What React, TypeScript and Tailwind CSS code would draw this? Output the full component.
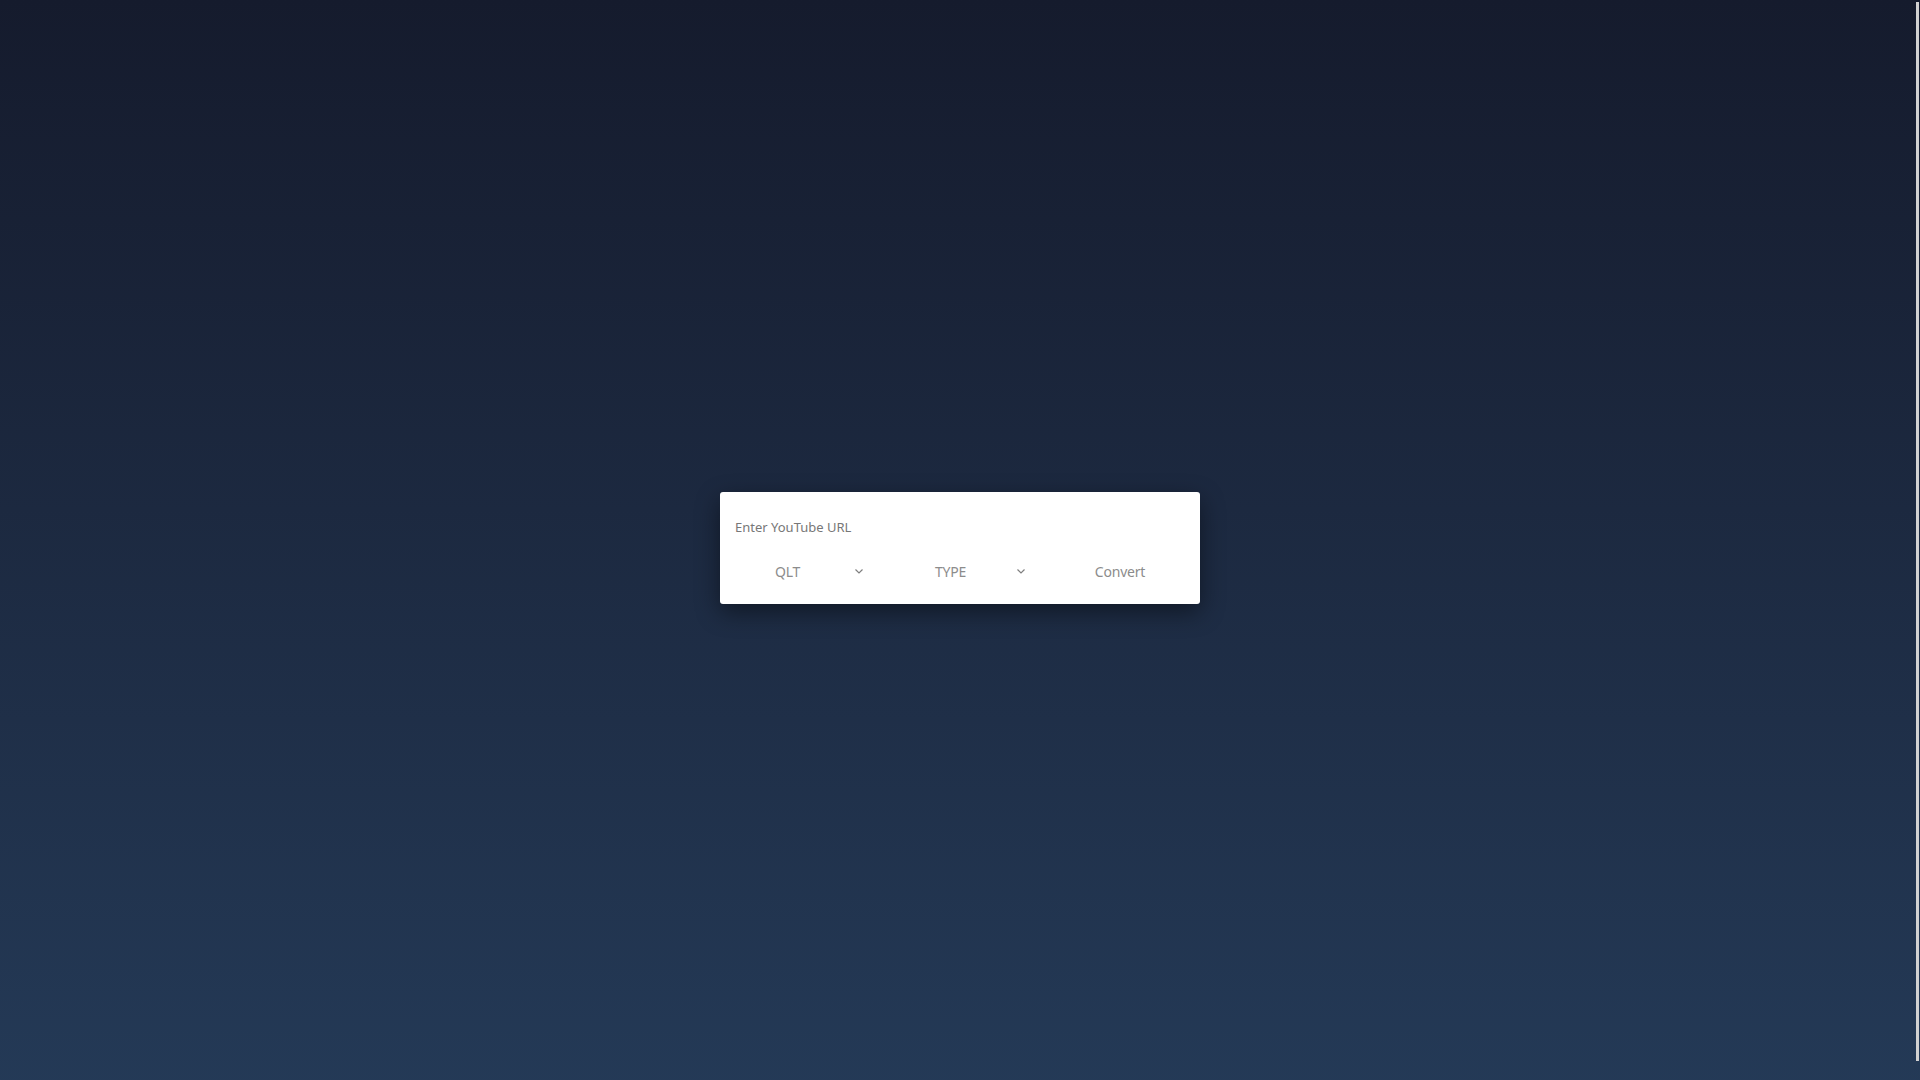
const font = { fontFamily: '"Noto Sans", "Open Sans", sans-serif' }

function Picker({ label, pad }: { label: string; pad: string }) {
  return (
    <div className={`flex items-center justify-between pl-[55px] cursor-pointer ${pad}`}>
      <span className="text-[14px] text-[#8c8c8c] tracking-[-0.2px]">{label}</span>
      <svg width="8" height="5" viewBox="0 0 8 5" fill="none" className="mt-[1px]">
        <polyline points="0.5,0.5 4,4 7.5,0.5" stroke="#7f7f7f" strokeWidth="1.2" />
      </svg>
    </div>
  )
}

export default function App() {
  return (
    <div className="min-h-screen w-full bg-[#1e2b43]" style={font}>
      <div className="h-[1096px] flex items-center justify-center bg-gradient-to-b from-[#151b2d] to-[#243a57]">
        <div className="w-[480px] h-[112px] bg-white rounded-[3px] shadow-[0_8px_24px_rgba(0,0,0,0.45)] pt-[15px] pb-[9px] flex flex-col">
          <input
            type="text"
            placeholder="Enter YouTube URL"
            className="h-10 w-full px-[15px] text-[13px] text-[#444] placeholder:text-[#777] outline-none bg-transparent"
          />
          <div className="grid grid-cols-3 h-12 items-center">
            <Picker label="QLT" pad="pr-[17px]" />
            <Picker label="TYPE" pad="pr-[15px]" />
            <button className="text-[14px] text-[#8c8c8c] text-center tracking-[-0.2px]">Convert</button>
          </div>
        </div>
      </div>
      {/* scrollbar thumb */}
      <div className="fixed right-[1px] top-[2px] w-[3px] h-[1059px] bg-[#d2d2d2]" />
    </div>
  )
}
